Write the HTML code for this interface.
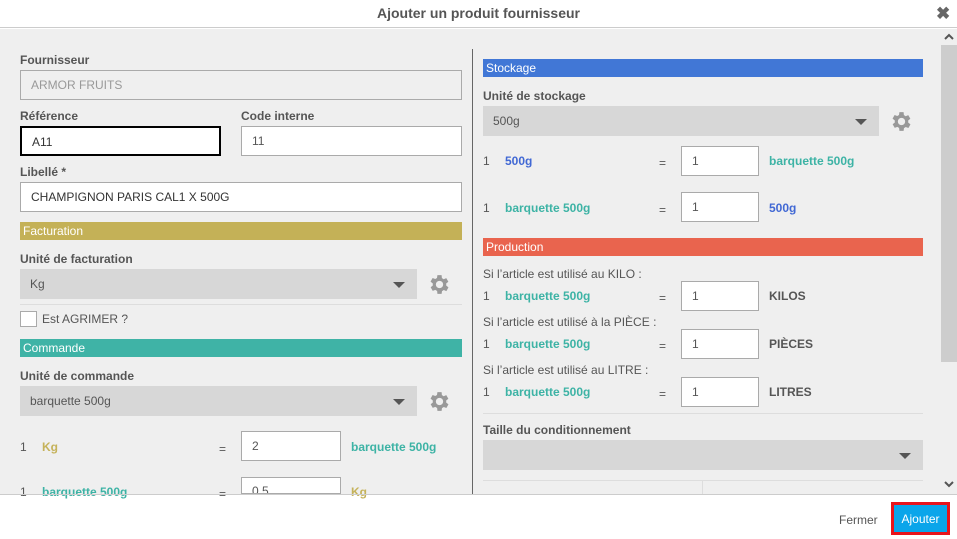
<!DOCTYPE html><html><head><meta charset="utf-8"><style>
*{box-sizing:border-box;margin:0;padding:0}
body{width:957px;height:539px;position:relative;overflow:hidden;font-family:"Liberation Sans",Arial,sans-serif;font-size:12px;color:#555;background:#fff}
.a{position:absolute}
.lbl{position:absolute;font-weight:bold;color:#555;font-size:12px}
.inp{position:absolute;background:#fff;border:1px solid #aaa;height:30px;line-height:28px;padding-left:10px;color:#555;font-size:12px}
.sel{position:absolute;background:#d7d7d7;height:30px;line-height:30px;padding-left:10px;color:#555}
.sel:after{content:"";position:absolute;right:12px;top:13px;border-left:6px solid transparent;border-right:6px solid transparent;border-top:6px solid #555}
.bar{position:absolute;height:18px;line-height:18px;color:#fff;padding-left:3px;font-size:12px}
.t{position:absolute;font-size:12px;color:#555}
.b{font-weight:bold}
.teal{color:#3db3a5;font-weight:bold}
.blue{color:#4168d4;font-weight:bold}
.gold{color:#c5b25a;font-weight:bold}
.hr{position:absolute;height:1px;background:#ddd}
</style></head><body>
<div class="a" style="left:0;top:0;width:957px;height:28px;border-bottom:1px solid #ccc;background:#fff"></div>
<div class="a b" style="left:0;top:5px;width:957px;text-align:center;font-size:14px;color:#555">Ajouter un produit fournisseur</div>
<div class="a b" style="left:936px;top:4px;font-size:17px;color:#666">✖</div>
<div class="a" style="left:0;top:29px;width:957px;height:465px;background:#efefef"></div>
<div class="a" style="left:941px;top:45px;width:16px;height:317px;background:#cdcdcd"></div>
<svg class="a" style="left:944px;top:33px" width="10" height="8"><path d="M1 6L5 2L9 6" stroke="#555" stroke-width="2" fill="none"/></svg>
<svg class="a" style="left:944px;top:480px" width="10" height="8"><path d="M1 2L5 6L9 2" stroke="#555" stroke-width="2" fill="none"/></svg>
<div class="a" style="left:472px;top:49px;width:1px;height:445px;background:#666"></div>
<div class="lbl" style="left:20px;top:53px">Fournisseur</div>
<div class="inp" style="left:20px;top:70px;width:442px;background:#efefef;color:#999">ARMOR FRUITS</div>
<div class="lbl" style="left:20px;top:109px">Référence</div>
<div class="inp" style="left:20px;top:126px;width:201px;border:2px solid #000;color:#333">A11</div>
<div class="lbl" style="left:241px;top:109px">Code interne</div>
<div class="inp" style="left:241px;top:126px;width:221px">11</div>
<div class="lbl" style="left:20px;top:165px">Libellé *</div>
<div class="inp" style="left:20px;top:182px;width:442px;color:#333">CHAMPIGNON PARIS CAL1 X 500G</div>
<div class="bar" style="left:20px;top:222px;width:442px;background:#c4b157">Facturation</div>
<div class="lbl" style="left:20px;top:252px">Unité de facturation</div>
<div class="sel" style="left:20px;top:269px;width:397px">Kg</div>
<svg class="a" style="left:427px;top:272px" width="25" height="25" viewBox="0 0 24 24"><path fill="#999" d="M19.4 13a7.5 7.5 0 000-2l2.1-1.6-2-3.5-2.5 1a7.5 7.5 0 00-1.7-1L15 3h-4l-.4 2.7a7.5 7.5 0 00-1.7 1l-2.5-1-2 3.5L6.6 11a7.5 7.5 0 000 2l-2.1 1.6 2 3.5 2.5-1a7.5 7.5 0 001.7 1L11 21h4l.4-2.7a7.5 7.5 0 001.7-1l2.5 1 2-3.5zM13 15.5a3.5 3.5 0 110-7 3.5 3.5 0 010 7z" transform="translate(-1 0)"/></svg>
<div class="hr" style="left:20px;top:304px;width:442px"></div>
<div class="a" style="left:20px;top:311px;width:17px;height:16px;border:1px solid #aaa;background:#fff"></div>
<div class="t" style="left:42px;top:312px">Est AGRIMER ?</div>
<div class="bar" style="left:20px;top:339px;width:442px;background:#3fb3a6">Commande</div>
<div class="lbl" style="left:20px;top:369px">Unité de commande</div>
<div class="sel" style="left:20px;top:386px;width:397px">barquette 500g</div>
<svg class="a" style="left:427px;top:389px" width="25" height="25" viewBox="0 0 24 24"><path fill="#999" d="M19.4 13a7.5 7.5 0 000-2l2.1-1.6-2-3.5-2.5 1a7.5 7.5 0 00-1.7-1L15 3h-4l-.4 2.7a7.5 7.5 0 00-1.7 1l-2.5-1-2 3.5L6.6 11a7.5 7.5 0 000 2l-2.1 1.6 2 3.5 2.5-1a7.5 7.5 0 001.7 1L11 21h4l.4-2.7a7.5 7.5 0 001.7-1l2.5 1 2-3.5zM13 15.5a3.5 3.5 0 110-7 3.5 3.5 0 010 7z" transform="translate(-1 0)"/></svg>
<div class="t" style="left:20px;top:440px">1</div><div class="t gold" style="left:42px;top:440px">Kg</div><div class="t" style="left:219px;top:442px">=</div>
<div class="inp" style="left:241px;top:431px;width:100px">2</div><div class="t teal" style="left:351px;top:440px">barquette 500g</div>
<div class="t" style="left:20px;top:485px">1</div><div class="t teal" style="left:42px;top:485px">barquette 500g</div><div class="t" style="left:219px;top:487px">=</div>
<div class="inp" style="left:241px;top:477px;width:100px;height:17px;overflow:hidden;line-height:26px">0.5</div><div class="t gold" style="left:351px;top:485px">Kg</div>
<div class="bar" style="left:483px;top:59px;width:440px;background:#4177d6">Stockage</div>
<div class="lbl" style="left:483px;top:89px">Unité de stockage</div>
<div class="sel" style="left:483px;top:106px;width:396px">500g</div>
<svg class="a" style="left:889px;top:109px" width="25" height="25" viewBox="0 0 24 24"><path fill="#999" d="M19.4 13a7.5 7.5 0 000-2l2.1-1.6-2-3.5-2.5 1a7.5 7.5 0 00-1.7-1L15 3h-4l-.4 2.7a7.5 7.5 0 00-1.7 1l-2.5-1-2 3.5L6.6 11a7.5 7.5 0 000 2l-2.1 1.6 2 3.5 2.5-1a7.5 7.5 0 001.7 1L11 21h4l.4-2.7a7.5 7.5 0 001.7-1l2.5 1 2-3.5zM13 15.5a3.5 3.5 0 110-7 3.5 3.5 0 010 7z" transform="translate(-1 0)"/></svg>
<div class="t" style="left:483px;top:154px">1</div><div class="t blue" style="left:505px;top:154px">500g</div><div class="t" style="left:659px;top:156px">=</div>
<div class="inp" style="left:681px;top:146px;width:78px">1</div><div class="t teal" style="left:769px;top:154px">barquette 500g</div>
<div class="t" style="left:483px;top:201px">1</div><div class="t teal" style="left:505px;top:201px">barquette 500g</div><div class="t" style="left:659px;top:203px">=</div>
<div class="inp" style="left:681px;top:192px;width:78px">1</div><div class="t blue" style="left:769px;top:201px">500g</div>
<div class="bar" style="left:483px;top:238px;width:440px;background:#e9644e">Production</div>
<div class="t" style="left:483px;top:267px">Si l’article est utilisé au KILO :</div>
<div class="t" style="left:483px;top:289px">1</div><div class="t teal" style="left:505px;top:289px">barquette 500g</div><div class="t" style="left:659px;top:291px">=</div>
<div class="inp" style="left:681px;top:281px;width:78px">1</div><div class="t b" style="left:769px;top:289px">KILOS</div>
<div class="t" style="left:483px;top:315px">Si l’article est utilisé à la PIÈCE :</div>
<div class="t" style="left:483px;top:337px">1</div><div class="t teal" style="left:505px;top:337px">barquette 500g</div><div class="t" style="left:659px;top:339px">=</div>
<div class="inp" style="left:681px;top:329px;width:78px">1</div><div class="t b" style="left:769px;top:337px">PIÈCES</div>
<div class="t" style="left:483px;top:363px">Si l’article est utilisé au LITRE :</div>
<div class="t" style="left:483px;top:385px">1</div><div class="t teal" style="left:505px;top:385px">barquette 500g</div><div class="t" style="left:659px;top:387px">=</div>
<div class="inp" style="left:681px;top:377px;width:78px">1</div><div class="t b" style="left:769px;top:385px">LITRES</div>
<div class="hr" style="left:483px;top:413px;width:440px"></div>
<div class="lbl" style="left:483px;top:423px">Taille du conditionnement</div>
<div class="sel" style="left:483px;top:440px;width:440px"></div>
<div class="hr" style="left:483px;top:480px;width:440px"></div>
<div class="a" style="left:702px;top:481px;width:1px;height:13px;background:#ddd"></div>
<div class="a" style="left:0;top:494px;width:957px;height:1px;background:#ccc"></div>
<div class="t" style="left:839px;top:513px;color:#555">Fermer</div>
<div class="a" style="left:891px;top:502px;width:59px;height:33px;border:3px solid #e8141c;background:#0aa5ea;color:#fff;text-align:center;line-height:28px;font-size:12px">Ajouter</div>
</body></html>
